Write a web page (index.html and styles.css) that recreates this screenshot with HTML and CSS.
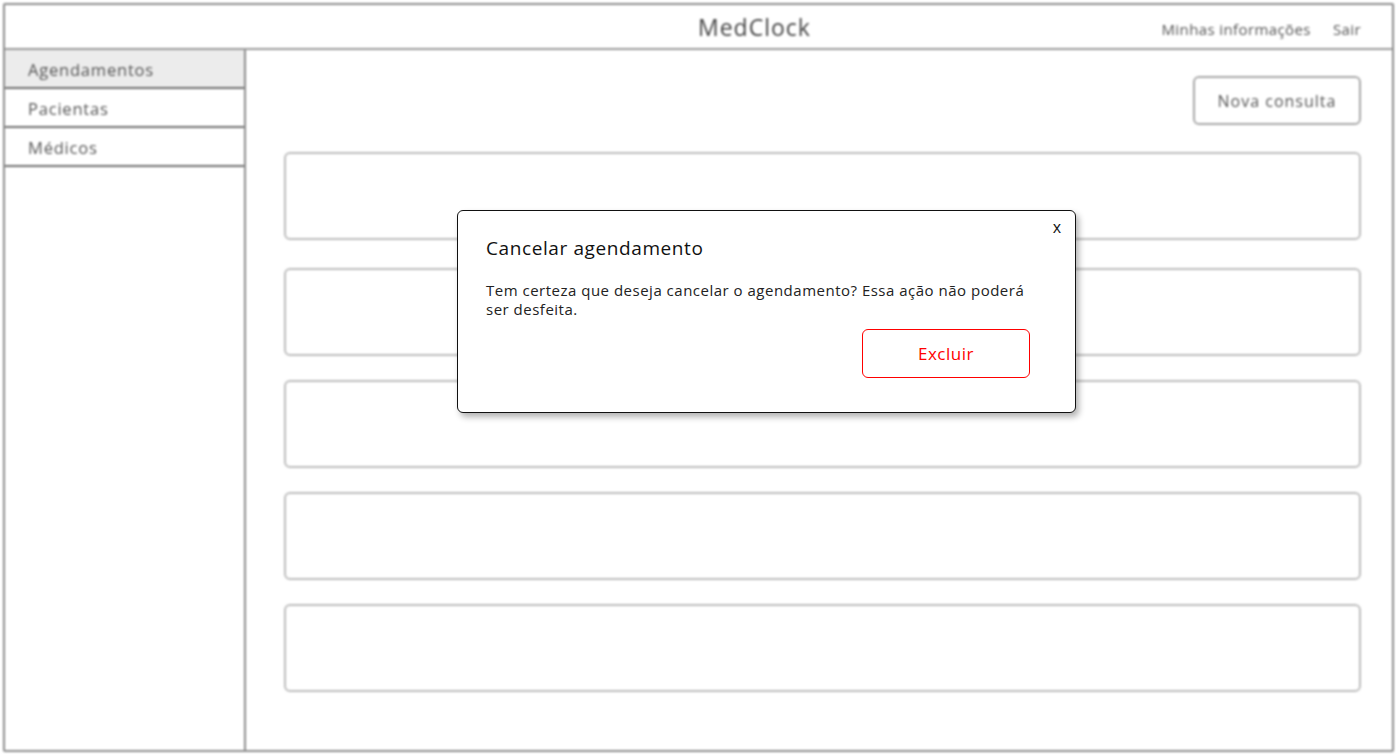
FILE: index.html
```html
<!DOCTYPE html>
<html lang="pt-BR">
<head>
<meta charset="utf-8">
<title>MedClock</title>
<link rel="stylesheet" href="styles.css">
</head>
<body>
<div class="app">
  <header class="topbar">
    <div class="brand">MedClock</div>
    <nav class="topnav">
      <a class="topnav-link">Minhas informações</a>
      <a class="topnav-link">Sair</a>
    </nav>
  </header>
  <div class="body">
    <aside class="sidebar">
      <div class="side-item active">Agendamentos</div>
      <div class="side-item">Pacientas</div>
      <div class="side-item">Médicos</div>
    </aside>
    <main class="main">
      <div class="toolbar">
        <button class="btn">Nova consulta</button>
      </div>
      <div class="cards">
        <div class="card"></div>
        <div class="card"></div>
        <div class="card"></div>
        <div class="card"></div>
        <div class="card"></div>
      </div>
    </main>
  </div>
</div>

<div class="modal">
  <span class="modal-close">x</span>
  <h2 class="modal-title">Cancelar agendamento</h2>
  <p class="modal-text">Tem certeza que deseja cancelar o agendamento? Essa ação não poderá<br>ser desfeita.</p>
  <div class="modal-actions">
    <button class="btn btn-danger">Excluir</button>
  </div>
</div>
</body>
</html>
```

FILE: styles.css
```css
* { box-sizing: border-box; }

html, body {
  margin: 0;
  padding: 0;
  background: #ffffff;
}

body {
  font-family: "Open Sans", "Noto Sans", sans-serif;
  color: #333;
  width: 1397px;
  height: 754px;
  overflow: hidden;
  position: relative;
}

.app {
  margin: 3px 3px 0 3px;
  height: 749px;
  border: 2px solid #8c8c8c;
  border-radius: 2px;
  display: flex;
  flex-direction: column;
  filter: blur(1px);
}

.topbar {
  height: 45px;
  border-bottom: 2px solid #9a9a9a;
  display: flex;
  align-items: center;
}

.brand {
  margin-left: 693px;
  font-size: 23px;
  letter-spacing: 1px;
  color: #444;
  font-weight: 500;
}

.topnav {
  margin-left: auto;
  margin-right: 31px;
  display: flex;
  gap: 22px;
  padding-top: 4px;
}

.topnav-link {
  font-size: 15px;
  letter-spacing: 0.4px;
  color: #555;
}

.body {
  flex: 1;
  display: flex;
  min-height: 0;
}

.sidebar {
  width: 241px;
  border-right: 2px solid #8c8c8c;
  display: flex;
  flex-direction: column;
}

.side-item {
  height: 39px;
  border-bottom: 2px solid #6f6f6f;
  padding-left: 23px;
  padding-top: 1px;
  display: flex;
  align-items: center;
  font-size: 16.5px;
  letter-spacing: 0.8px;
  color: #555;
}

.side-item.active {
  background: #ececec;
}

.main {
  flex: 1;
  padding: 26px 31px 0 38px;
  display: flex;
  flex-direction: column;
}

.toolbar {
  display: flex;
  justify-content: flex-end;
}

.btn {
  width: 168px;
  height: 49px;
  background: #fff;
  border: 2px solid #a8a8a8;
  border-radius: 6px;
  font-family: inherit;
  font-size: 16px;
  letter-spacing: 1px;
  color: #555;
}

.cards {
  margin-top: 27px;
  display: flex;
  flex-direction: column;
  gap: 24px;
}

.card {
  height: 88px;
  border: 2px solid #bdbdbd;
  border-radius: 6px;
}

.card:first-child {
  margin-bottom: 4px;
}

.modal {
  position: absolute;
  left: 457px;
  top: 210px;
  width: 619px;
  height: 203px;
  background: #fff;
  border: 1px solid #111;
  border-radius: 6px;
  box-shadow: 3px 4px 6px rgba(0, 0, 0, 0.3);
  padding: 25px 28px 0 28px;
}

.modal-close {
  position: absolute;
  top: 5px;
  right: 14px;
  font-size: 16px;
  color: #111;
}

.modal-title {
  margin: 0;
  font-size: 19px;
  letter-spacing: 0.6px;
  font-weight: 400;
  color: #111;
  line-height: 24px;
}

.modal-text {
  margin: 21px 0 0 0;
  font-size: 15px;
  letter-spacing: 0.5px;
  line-height: 19px;
  color: #222;
}

.modal-actions {
  display: flex;
  justify-content: flex-end;
  margin-top: 10px;
  padding-right: 17px;
}

.btn-danger {
  border: 1px solid #ff0000;
  color: #ff0000;
  font-size: 17px;
  letter-spacing: 0.5px;
}
```
